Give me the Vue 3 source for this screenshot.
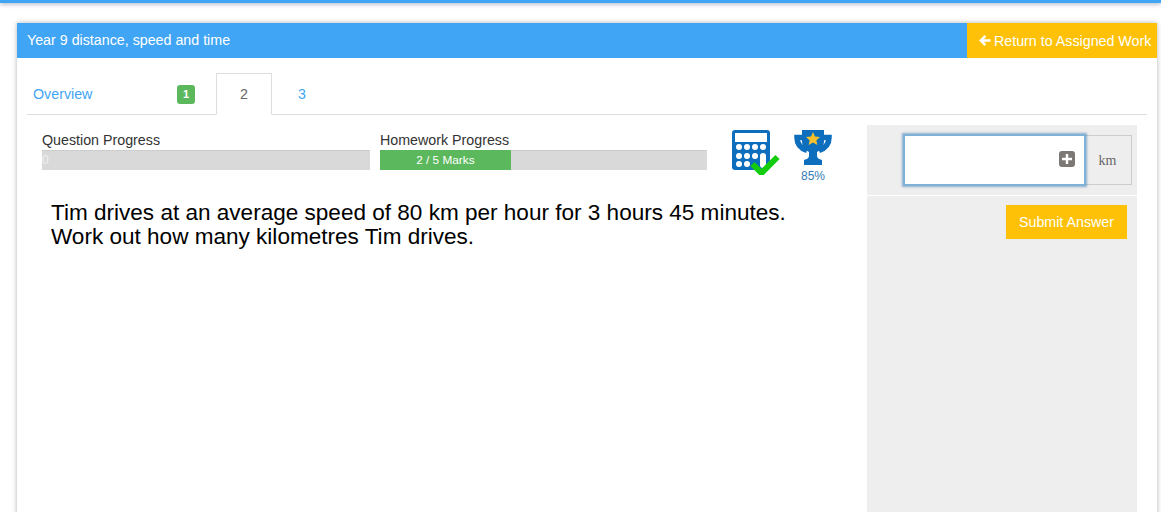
<script setup>
const tabs = [
  { label: "Overview", width: 110 },
  { label: "1", badge: true, width: 79 },
  { label: "2", active: true, width: 56 },
  { label: "3", width: 60 },
];
</script>

<template>
  <div class="page">
    <div class="topbar"></div>
    <div class="card">
      <div class="card-head">
        <div class="card-title">Year 9 distance, speed and time</div>
        <a class="return-btn">
          <svg class="arrow" viewBox="0 0 12 12" width="13" height="13">
            <path d="M6 1 L1 6 L6 11 L7.6 9.4 L5.4 7.2 H11.5 V4.8 H5.4 L7.6 2.6 Z" fill="#fff" />
          </svg>
          Return to Assigned Work
        </a>
      </div>

      <div class="tabs">
        <div
          v-for="tab in tabs"
          :key="tab.label"
          class="tab"
          :class="{ active: tab.active, 'has-badge': tab.badge }"
          :style="{ width: tab.width + 'px' }"
        >
          <span v-if="tab.badge" class="badge">{{ tab.label }}</span>
          <template v-else>{{ tab.label }}</template>
        </div>
      </div>

      <div class="content">
        <div class="main">
          <div class="progress-row">
            <div class="progress-block">
              <div class="progress-label">Question Progress</div>
              <div class="bar"><span class="zero">0</span></div>
            </div>
            <div class="progress-block">
              <div class="progress-label">Homework Progress</div>
              <div class="bar"><div class="bar-fill" style="width: 40%">2 / 5 Marks</div></div>
            </div>
            <svg class="calc" viewBox="0 0 48 45" width="48" height="45">
              <rect x="0" y="0" width="38" height="40" rx="3" fill="#0d6ebd" />
              <rect x="3" y="3" width="32" height="9" fill="#fff" />
              <g fill="#fff">
                <circle cx="7" cy="17" r="3" /><circle cx="15" cy="17" r="3" />
                <circle cx="23" cy="17" r="3" /><circle cx="31" cy="17" r="3" />
                <circle cx="7" cy="26" r="3" /><circle cx="15" cy="26" r="3" />
                <circle cx="23" cy="26" r="3" />
                <circle cx="7" cy="34" r="3" /><circle cx="15" cy="34" r="3" />
                <rect x="28" y="23" width="6" height="15" rx="3" />
              </g>
              <path d="M20.5 34 L29.5 43 L45.5 27" fill="none" stroke="#14cc0e" stroke-width="6" />
            </svg>
            <div class="trophy">
              <svg viewBox="0 0 38 35" width="38" height="35">
                <path d="M8 0 H30 V11 C30 18 25 21 23 22 V26 C23 28 25 29 28 30 V35 H10 V30 C13 29 15 28 15 26 V22 C13 21 8 18 8 11 Z" fill="#0d6ebd" />
                <path d="M9 7.5 H3 C3 13 6 18 13 20.5 M29 7.5 H35 C35 13 32 18 25 20.5" fill="none" stroke="#0d6ebd" stroke-width="5.5" />
                <path d="M19 2 L21 6.5 L26 7 L22.3 10.4 L23.4 15 L19 12.6 L14.6 15 L15.7 10.4 L12 7 L17 6.5 Z" fill="#f5c02c" />
              </svg>
              <div class="pct">85%</div>
            </div>
          </div>
          <div class="question">
            Tim drives at an average speed of 80 km per hour for 3 hours 45 minutes.<br />
            Work out how many kilometres Tim drives.
          </div>
        </div>

        <div class="side">
          <div class="answer-row">
            <div class="answer-input">
              <span class="plus">
                <svg viewBox="0 0 16 16" width="16" height="16">
                  <rect width="16" height="16" rx="3" fill="#7b7875" />
                  <path d="M8 3 V13 M3 8 H13" stroke="#fff" stroke-width="2.4" />
                </svg>
              </span>
            </div>
            <div class="unit">km</div>
          </div>
          <div class="submit-row">
            <button class="submit">Submit Answer</button>
          </div>
        </div>
      </div>
    </div>
  </div>
</template>

<style>
html,
body {
  margin: 0;
  background: #fff;
  overflow: hidden;
}
</style>

<style scoped>
.page {
  height: 512px;
  overflow: hidden;
  font-family: "Liberation Sans", Arial, sans-serif;
  font-size: 14.25px;
  color: #333;
}

.topbar {
  height: 3px;
  background: #3fa5f4;
  box-shadow: 0 1px 4px rgba(60, 70, 110, 0.5);
}

.card {
  margin: 20px 4px 0 17px;
  height: 500px;
  background: #fff;
  box-shadow: 0 0 5px rgba(0, 0, 0, 0.3);
}

.card-head {
  display: flex;
  justify-content: space-between;
  height: 35px;
  background: #3fa5f4;
  color: #fff;
}

.card-title {
  padding-left: 10px;
  line-height: 35px;
}

.return-btn {
  display: flex;
  align-items: center;
  gap: 3px;
  width: 190px;
  box-sizing: border-box;
  padding-left: 11px;
  background: #fec107;
  white-space: nowrap;
}

.tabs {
  display: flex;
  height: 41px;
  margin: 15px 10px 0;
  border-bottom: 1px solid #ddd;
}

.tab {
  box-sizing: border-box;
  height: 42px;
  padding-top: 13px;
  padding-left: 6px;
  color: #3fa5f4;
  line-height: 16px;
  text-align: left;
}

.tab.has-badge {
  padding-top: 12px;
  padding-left: 40px;
}

.tab.active {
  padding-left: 0;
  text-align: center;
  border: 1px solid #ddd;
  border-bottom-color: #fff;
  background: #fff;
  color: #666;
  padding-top: 12px;
}

.tab:last-child {
  padding-left: 26px;
}

.badge {
  display: inline-block;
  width: 18px;
  height: 19px;
  border-radius: 3px;
  background: #5cb85c;
  color: #fff;
  font-size: 11px;
  font-weight: 700;
  line-height: 19px;
  text-align: center;
}

.content {
  display: flex;
  margin-top: 10px;
  height: 400px;
}

.main {
  width: 850px;
}

.progress-row {
  display: flex;
  padding: 8px 0 0 25px;
}

.progress-block {
  width: 328px;
  margin-right: 10px;
}

.progress-block + .progress-block {
  width: 327px;
  margin-right: 25px;
}

.progress-label {
  line-height: 15px;
}

.bar {
  height: 20px;
  margin-top: 2px;
  background: #d9d9d9;
  border-top: 1px solid #ccc;
  box-sizing: border-box;
  font-size: 12px;
  line-height: 18px;
  color: #fff;
}

.zero {
  color: #f0f0f0;
}

.bar-fill {
  height: 20px;
  margin-top: -1px;
  background: #5cb85c;
  font-size: 11.8px;
  text-align: center;
  line-height: 20px;
}

.calc {
  margin-top: -3px;
}

.trophy {
  margin: -3px 0 0 14px;
  width: 38px;
  text-align: center;
}

.trophy svg {
  display: block;
}

.pct {
  margin-top: 4px;
  color: #337ab7;
  font-size: 12px;
}

.question {
  margin: 18px 0 0 34px;
  color: #000;
  font-size: 22.55px;
  line-height: 24px;
}

.side {
  width: 270px;
  background: #eee;
}

.answer-row {
  display: flex;
  height: 71px;
  box-sizing: border-box;
  padding: 10px 5px 0 36px;
  border-bottom: 1px solid #fff;
}

.answer-input {
  position: relative;
  width: 183px;
  height: 52px;
  box-sizing: border-box;
  background: #fff;
  border: 2px solid #7fb0d6;
  box-shadow: 0 0 2px 1px rgba(80, 130, 180, 0.6);
  margin-top: -1px;
}

.plus {
  position: absolute;
  right: 9px;
  top: 15px;
  line-height: 0;
}

.unit {
  width: 46px;
  height: 50px;
  box-sizing: border-box;
  border: 1px solid #ccc;
  border-left: 0;
  padding-right: 2px;
  color: #666;
  font-family: "Liberation Serif", serif;
  font-size: 14px;
  line-height: 50px;
  text-align: center;
}

.submit-row {
  display: flex;
  justify-content: flex-end;
  padding: 9px 10px 0 0;
}

.submit {
  width: 121px;
  height: 34px;
  padding: 0;
  border: 0;
  background: #fec107;
  color: #fff;
  font-family: inherit;
  font-size: 14.25px;
}
</style>
